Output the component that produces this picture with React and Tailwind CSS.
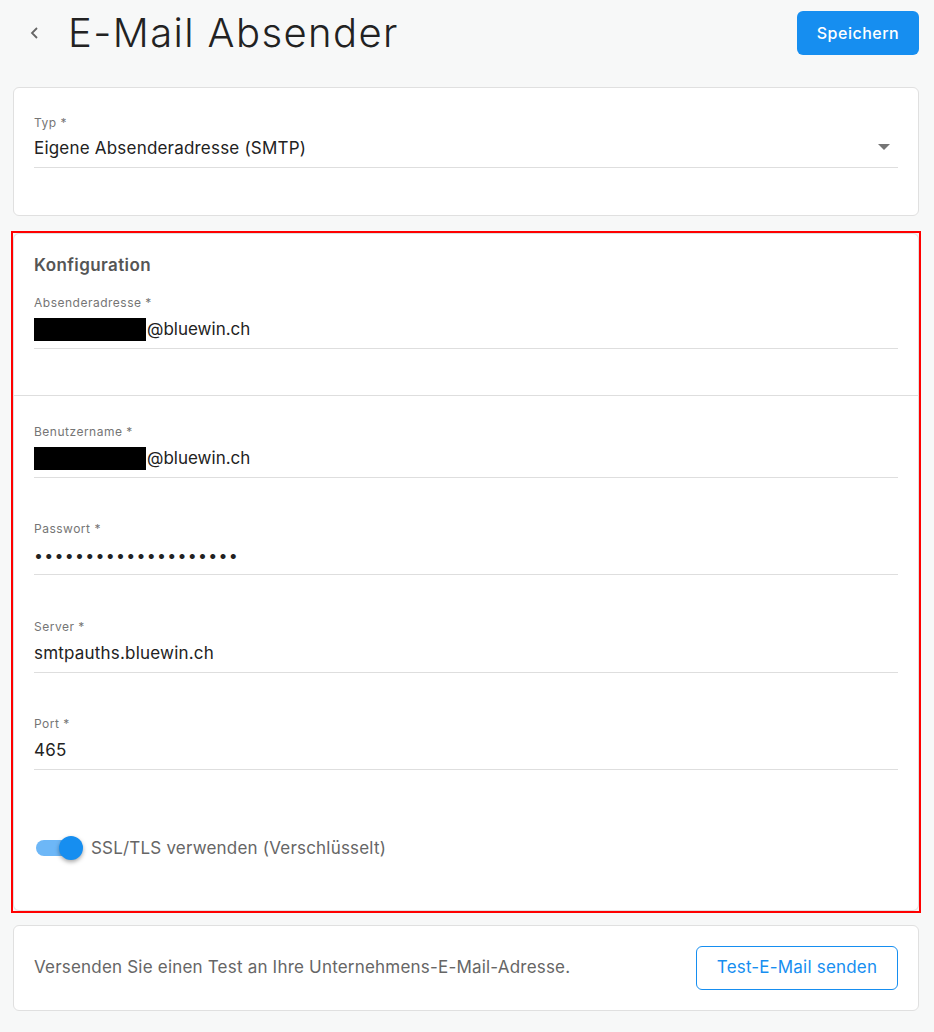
import React from "react";

function Field({ label, children, className = "", gap = "mt-[6px]" }) {
  return (
    <div className={"border-b border-[#dedede] pb-[7px] " + className}>
      <div className="text-[12px] leading-[16px] tracking-[0.5px] text-[#757575]">{label}</div>
      <div className={gap + " flex items-center text-[17px] leading-[24px] tracking-[0.2px] text-[#222]"}>{children}</div>
    </div>
  );
}

function Masked() {
  return (
    <>
      <span className="inline-block h-[23px] w-[112px] bg-black" />
      <span className="ml-px tracking-normal">@bluewin.ch</span>
    </>
  );
}

export default function App() {
  const dots = Array.from({ length: 20 });

  return (
    <div className="min-h-screen bg-[#f7f8f8] font-['Inter',sans-serif] pb-[21px]">
      {/* header */}
      <div className="flex h-[66px] items-center justify-between pl-[29px] pr-[15px]">
        <div className="flex items-center">
          <svg width="12" height="14" viewBox="0 0 12 14" className="mt-[-1px]">
            <polyline points="8,2 3,7 8,12" fill="none" stroke="#666" strokeWidth="1.8" />
          </svg>
          <h1 className="ml-[27px] text-[40px] font-light leading-[48px] tracking-[1.4px] text-[#222]">E-Mail Absender</h1>
        </div>
        <button className="h-[44px] w-[122px] rounded-[6px] bg-[#168ef0] text-[16px] font-medium tracking-[0.5px] text-white">
          Speichern
        </button>
      </div>

      <div className="ml-[13px] mr-[15px] mt-[21px]">
        {/* Typ card */}
        <div className="rounded-[6px] border border-[#e0e0e0] bg-white px-[20px] pb-[47px] pt-[27px]">
          <div className="relative">
            <Field label="Typ *" gap="mt-[5px]">Eigene Absenderadresse (SMTP)</Field>
            <svg width="12" height="7" viewBox="0 0 12 7" className="absolute right-[8px] top-[29px]">
              <polygon points="0,0 12,0 6,6" fill="#757575" />
            </svg>
          </div>
        </div>

        {/* Konfiguration */}
        <div className="-mx-[2px] mt-[15px] border-2 border-[#ff0000]">
          <div className="rounded-[6px] border border-[#e0e0e0] bg-white">
            <div className="px-[20px] pb-[46px] pt-[19px]">
              <h2 className="text-[17px] font-semibold leading-[24px] tracking-[0.4px] text-[#555]">Konfiguration</h2>
              <Field label="Absenderadresse *" className="mt-[18px]">
                <Masked />
              </Field>
            </div>
            <div className="border-t border-[#dedede] px-[20px] pb-[50px] pt-[28px]">
              <Field label="Benutzername *">
                <Masked />
              </Field>
              <Field label="Passwort *" className="mt-[43px]">
                <span className="flex">
                  {dots.map((_, i) => (
                    <span key={i} className="w-[10.25px] text-[16px] leading-[24px]">•</span>
                  ))}
                </span>
              </Field>
              <Field label="Server *" className="mt-[44px]">smtpauths.bluewin.ch</Field>
              <Field label="Port *" className="mt-[43px]">465</Field>

              <div className="mt-[66px] flex items-center">
                <div className="relative h-[24px] w-[50px]">
                  <div className="absolute left-[2px] top-[4px] h-[16px] w-[36px] rounded-full bg-[#6db7f7]" />
                  <div className="absolute left-[25px] top-0 h-[24px] w-[24px] rounded-full bg-[#168ef0] shadow-[0_2px_4px_rgba(0,0,0,0.35)]" />
                </div>
                <span className="ml-[7px] text-[17px] leading-[24px] tracking-[0.2px] text-[#666]">SSL/TLS verwenden (Verschlüsselt)</span>
              </div>
            </div>
          </div>
        </div>

        {/* Test card */}
        <div className="mt-[12px] flex h-[86px] items-center justify-between rounded-[6px] border border-[#e0e0e0] bg-white pl-[20px] pr-[20px]">
          <span className="text-[17px] tracking-[0.2px] text-[#666]">Versenden Sie einen Test an Ihre Unternehmens-E-Mail-Adresse.</span>
          <button className="h-[44px] w-[202px] rounded-[6px] border border-[#168ef0] text-[17px] tracking-[0.2px] text-[#168ef0]">
            Test-E-Mail senden
          </button>
        </div>
      </div>
    </div>
  );
}
